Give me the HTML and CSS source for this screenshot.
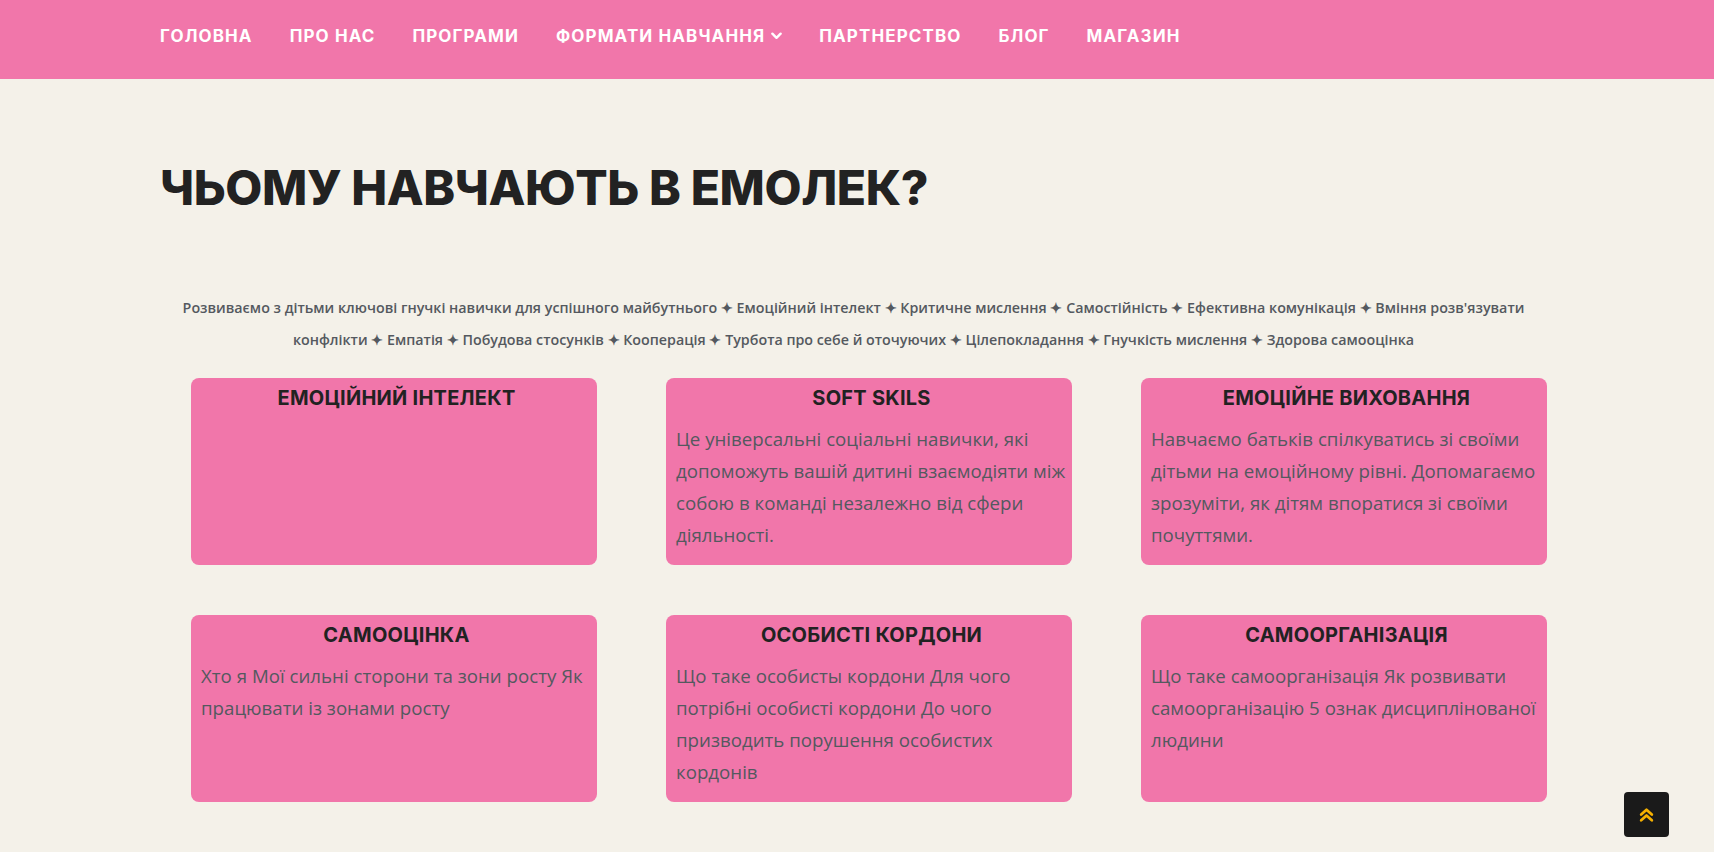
FILE: index.html
```html
<!DOCTYPE html>
<html lang="uk">
<head>
<meta charset="utf-8">
<title>Чому навчають в Емолек?</title>
<link rel="stylesheet" href="styles.css">
</head>
<body>
<header class="nav">
  <ul class="menu">
    <li><a href="#">Головна</a></li>
    <li><a href="#">Про нас</a></li>
    <li><a href="#">Програми</a></li>
    <li><a href="#" class="has-sub">Формати навчання
      <svg class="chev" viewBox="0 0 12 8" width="11" height="8" aria-hidden="true"><path d="M1.5 1.5 L6 6 L10.5 1.5" fill="none" stroke="#fff" stroke-width="2.6" stroke-linecap="round" stroke-linejoin="round"/></svg></a></li>
    <li><a href="#">Партнерство</a></li>
    <li><a href="#">Блог</a></li>
    <li><a href="#">Магазин</a></li>
  </ul>
</header>

<main class="content">
  <h1 class="title">Чьому навчають в Емолек?</h1>
  <p class="lead">Розвиваємо з дітьми ключові гнучкі навички для успішного майбутнього ✦ Емоційний інтелект ✦ Критичне мислення ✦ Самостійність ✦ Ефективна комунікація ✦ Вміння розв'язувати конфлікти ✦ Емпатія ✦ Побудова стосунків ✦ Кооперація ✦ Турбота про себе й оточуючих ✦ Цілепокладання ✦ Гнучкість мислення ✦ Здорова самооцінка</p>

  <div class="grid">
    <div class="card">
      <h3 class="card-title">Емоційний інтелект</h3>
    </div>
    <div class="card">
      <h3 class="card-title">Soft skils</h3>
      <p class="card-text">Це універсальні соціальні навички, які допоможуть вашій дитині взаємодіяти між собою в команді незалежно від сфери діяльності.</p>
    </div>
    <div class="card">
      <h3 class="card-title">Емоційне виховання</h3>
      <p class="card-text">Навчаємо батьків спілкуватись зі своїми дітьми на емоційному рівні. Допомагаємо зрозуміти, як дітям впоратися зі своїми почуттями.</p>
    </div>
    <div class="card">
      <h3 class="card-title">Самооцінка</h3>
      <p class="card-text">Хто я Мої сильні сторони та зони росту Як працювати із зонами росту</p>
    </div>
    <div class="card">
      <h3 class="card-title">Особисті кордони</h3>
      <p class="card-text">Що таке особисты кордони Для чого потрібні особисті кордони До чого призводить порушення особистих кордонів</p>
    </div>
    <div class="card">
      <h3 class="card-title">Самоорганізація</h3>
      <p class="card-text">Що таке самоорганізація Як розвивати самоорганізацію 5 ознак дисциплінованої людини</p>
    </div>
  </div>
</main>

<a href="#" class="to-top" aria-label="Вгору">
  <svg viewBox="0 0 14 16" width="15" height="17" aria-hidden="true">
    <path d="M2 8 L7 3.5 L12 8" fill="none" stroke="#f5b000" stroke-width="2.6" stroke-linecap="round" stroke-linejoin="round"/>
    <path d="M2 13.5 L7 9 L12 13.5" fill="none" stroke="#f5b000" stroke-width="2.6" stroke-linecap="round" stroke-linejoin="round"/>
  </svg>
</a>
</body>
</html>
```

FILE: styles.css
```css
html, body {
  margin: 0;
  padding: 0;
}

body {
  background: #f4f1e9;
  font-family: "Open Sans", "Noto Sans", sans-serif;
  color: #54595f;
  min-height: 852px;
}

.nav {
  background: #f176aa;
  height: 79px;
  box-sizing: border-box;
  padding-bottom: 8px;
  display: flex;
  align-items: center;
}

.menu {
  list-style: none;
  margin: 0;
  padding: 0 0 0 160px;
  display: flex;
  gap: 37px;
}

.menu a {
  color: #fff;
  text-decoration: none;
  font-family: "Inter", "DejaVu Sans", sans-serif;
  font-weight: 700;
  font-size: 17px;
  letter-spacing: 1.1px;
  text-transform: uppercase;
  display: flex;
  align-items: center;
  gap: 6px;
}

.chev {
  display: block;
  margin-top: 1px;
}

.content {
  padding: 0 0 40px 160px;
}

.title {
  margin: 80px 0 0;
  font-family: "Inter", "DejaVu Sans", sans-serif;
  font-weight: 800;
  font-size: 48px;
  line-height: 58px;
  letter-spacing: -0.4px;
  color: #222;
  text-transform: uppercase;
}

.lead {
  width: 1387px;
  margin: 75px 0 0;
  text-align: center;
  font-size: 14.28px;
  font-weight: 600;
  line-height: 32px;
  color: #54595f;
}

.grid {
  display: grid;
  grid-template-columns: repeat(3, 406px);
  column-gap: 69px;
  row-gap: 50px;
  margin: 22px 0 0 31px;
}

.card {
  background: #f176aa;
  border-radius: 8px;
  padding: 8px 0 13px 10px;
  min-height: 166px;
}

.card-title {
  margin: 0 5px 13px 0;
  text-align: center;
  font-family: "Inter", "DejaVu Sans", sans-serif;
  font-weight: 700;
  font-size: 20px;
  line-height: 24px;
  letter-spacing: 0.25px;
  color: #222;
  text-transform: uppercase;
}

.card-text {
  margin: 0;
  font-size: 18.7px;
  line-height: 32px;
  color: #54595f;
}

.to-top {
  position: fixed;
  right: 45px;
  bottom: 15px;
  width: 45px;
  height: 45px;
  border-radius: 4px;
  background: #1a1a1a;
  display: flex;
  align-items: center;
  justify-content: center;
}
```
